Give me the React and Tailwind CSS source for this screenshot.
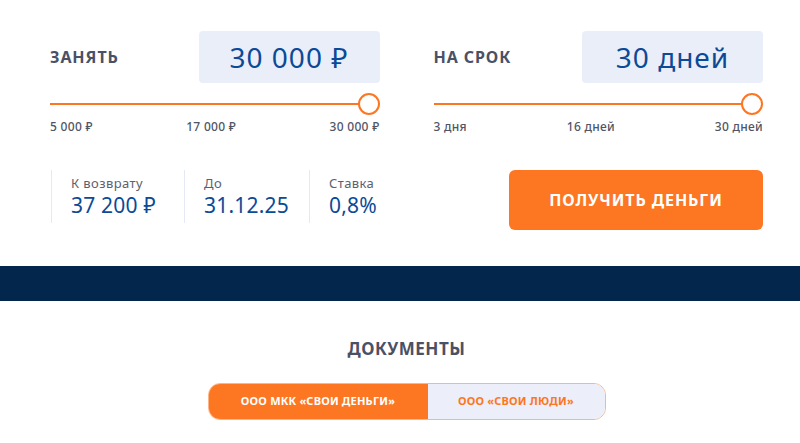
import React from 'react';

const font = { fontFamily: '"Noto Sans", "Open Sans", sans-serif' };

function Slider({ label, value, ticks }) {
    return (
        <div>
            <div className="flex items-center justify-between">
                <span className="text-[16px] font-bold tracking-[0.9px] text-[#4a5166]">{label}</span>
                <div className="flex h-[52px] w-[181px] items-center justify-center rounded-[4px] bg-[#eaeef9] text-[28px] tracking-[1px] text-[#0b4a97]">
                    {value}
                </div>
            </div>
            <div className="relative mt-[10px] h-[22px]">
                <div className="absolute left-0 right-[11px] top-[10px] h-[2px] bg-[#fd7622]" />
                <div className="absolute right-0 top-0 h-[22px] w-[22px] rounded-full border-2 border-[#fd7622] bg-white" />
            </div>
            <div className="mt-[3px] flex justify-between text-[12px] font-medium tracking-[0.3px] text-[#505565]">
                {ticks.map((t) => (
                    <span key={t}>{t}</span>
                ))}
            </div>
        </div>
    );
}

function Stat({ label, value, width }) {
    return (
        <div className={`border-l border-[#e4e9f4] pl-[19px] pt-[4px] pb-[5px] ${width}`}>
            <div className="text-[13px] leading-[18px] tracking-[0.4px] text-[#5c6170]">{label}</div>
            <div className="text-[21px] leading-[26px] tracking-[0.2px] text-[#0b4a97]">{value}</div>
        </div>
    );
}

export default function App() {
    return (
        <div className="w-[800px] bg-white" style={font}>
            <div className="pl-[50px] pr-[37px] pt-[31px]">
                <div className="grid grid-cols-2 gap-[54px]">
                    <Slider label="ЗАНЯТЬ" value="30 000 ₽" ticks={['5 000 ₽', '17 000 ₽', '30 000 ₽']} />
                    <Slider label="НА СРОК" value="30 дней" ticks={['3 дня', '16 дней', '30 дней']} />
                </div>
                <div className="mt-[34px] flex items-start justify-between">
                    <div className="flex pl-[1px]">
                        <Stat label="К возврату" value="37 200 ₽" width="w-[133px]" />
                        <Stat label="До" value="31.12.25" width="w-[125px]" />
                        <Stat label="Ставка" value="0,8%" width="w-[100px]" />
                    </div>
                    <button className="flex h-[60px] w-[254px] items-center justify-center rounded-[6px] bg-[#fd7622] text-[16px] font-bold tracking-[0.9px] text-white">
                        ПОЛУЧИТЬ ДЕНЬГИ
                    </button>
                </div>
            </div>
            <div className="mt-[36px] h-[35px] bg-[#03264c]" />
            <div className="flex flex-col items-center pl-[50px] pr-[37px] pt-[35px] pb-[23px]">
                <h2 className="text-[17px] font-bold tracking-[0.5px] text-[#4a5166]">ДОКУМЕНТЫ</h2>
                <div className="mt-[21px] flex h-[37px] w-[398px] overflow-hidden rounded-[12px] border border-[#fdb587] text-[11px] font-bold tracking-[0.2px]">
                    <div className="flex w-[219px] items-center justify-center bg-[#fd7622] text-white">
                        ООО МКК «СВОИ ДЕНЬГИ»
                    </div>
                    <div className="flex flex-1 items-center justify-center bg-[#eceef9] text-[#fd7622]">
                        ООО «СВОИ ЛЮДИ»
                    </div>
                </div>
            </div>
        </div>
    );
}
